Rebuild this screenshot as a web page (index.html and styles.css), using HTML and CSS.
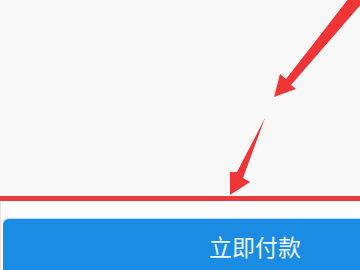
FILE: index.html
```html
<!DOCTYPE html>
<html lang="zh">
<head>
<meta charset="utf-8">
<link rel="stylesheet" href="styles.css">
</head>
<body>
<div class="page">
  <div class="content"></div>
  <div class="footer">
    <div class="pay-btn" role="button">立即付款</div>
  </div>
  <svg class="annot" width="360" height="270" viewBox="0 0 360 270">
    <polygon fill="#ef3535" points="274,97 280,74 286,79 349,-2 363,-2 363,2 291,85 296,89"/>
    <polygon fill="#ef3535" points="230,195 230,172 237,172 265,118 243,178 250,182"/>
  </svg>
</div>
</body>
</html>
```

FILE: styles.css
```css
html, body {
  margin: 0;
  padding: 0;
  background: #f8f8f8;
  overflow: hidden;
  width: 360px;
  height: 270px;
}
.page {
  position: relative;
  width: 360px;
  height: 270px;
  overflow: hidden;
  display: flex;
  flex-direction: column;
}
.content {
  height: 196px;
  flex: none;
  background: #f8f8f8;
}
.footer {
  flex: 1;
  background: #fdfdfd;
  border-top: 5px solid #ec3a3a;
  padding: 18px 0 0 3px;
  box-shadow: inset 1px 0 0 #f6dede;
}
.pay-btn {
  width: 504px;
  height: 60px;
  box-sizing: border-box;
  border-radius: 6px;
  background: #1b8ce3;
  box-shadow: 0 -1px 0 #b3d9f4;
  color: #eef6fc;
  font-family: "Noto Sans CJK SC", "Noto Sans", sans-serif;
  font-size: 23px;
  line-height: 23px;
  padding-top: 16px;
  text-align: center;
}
.annot {
  position: absolute;
  left: 0;
  top: 0;
}
```
